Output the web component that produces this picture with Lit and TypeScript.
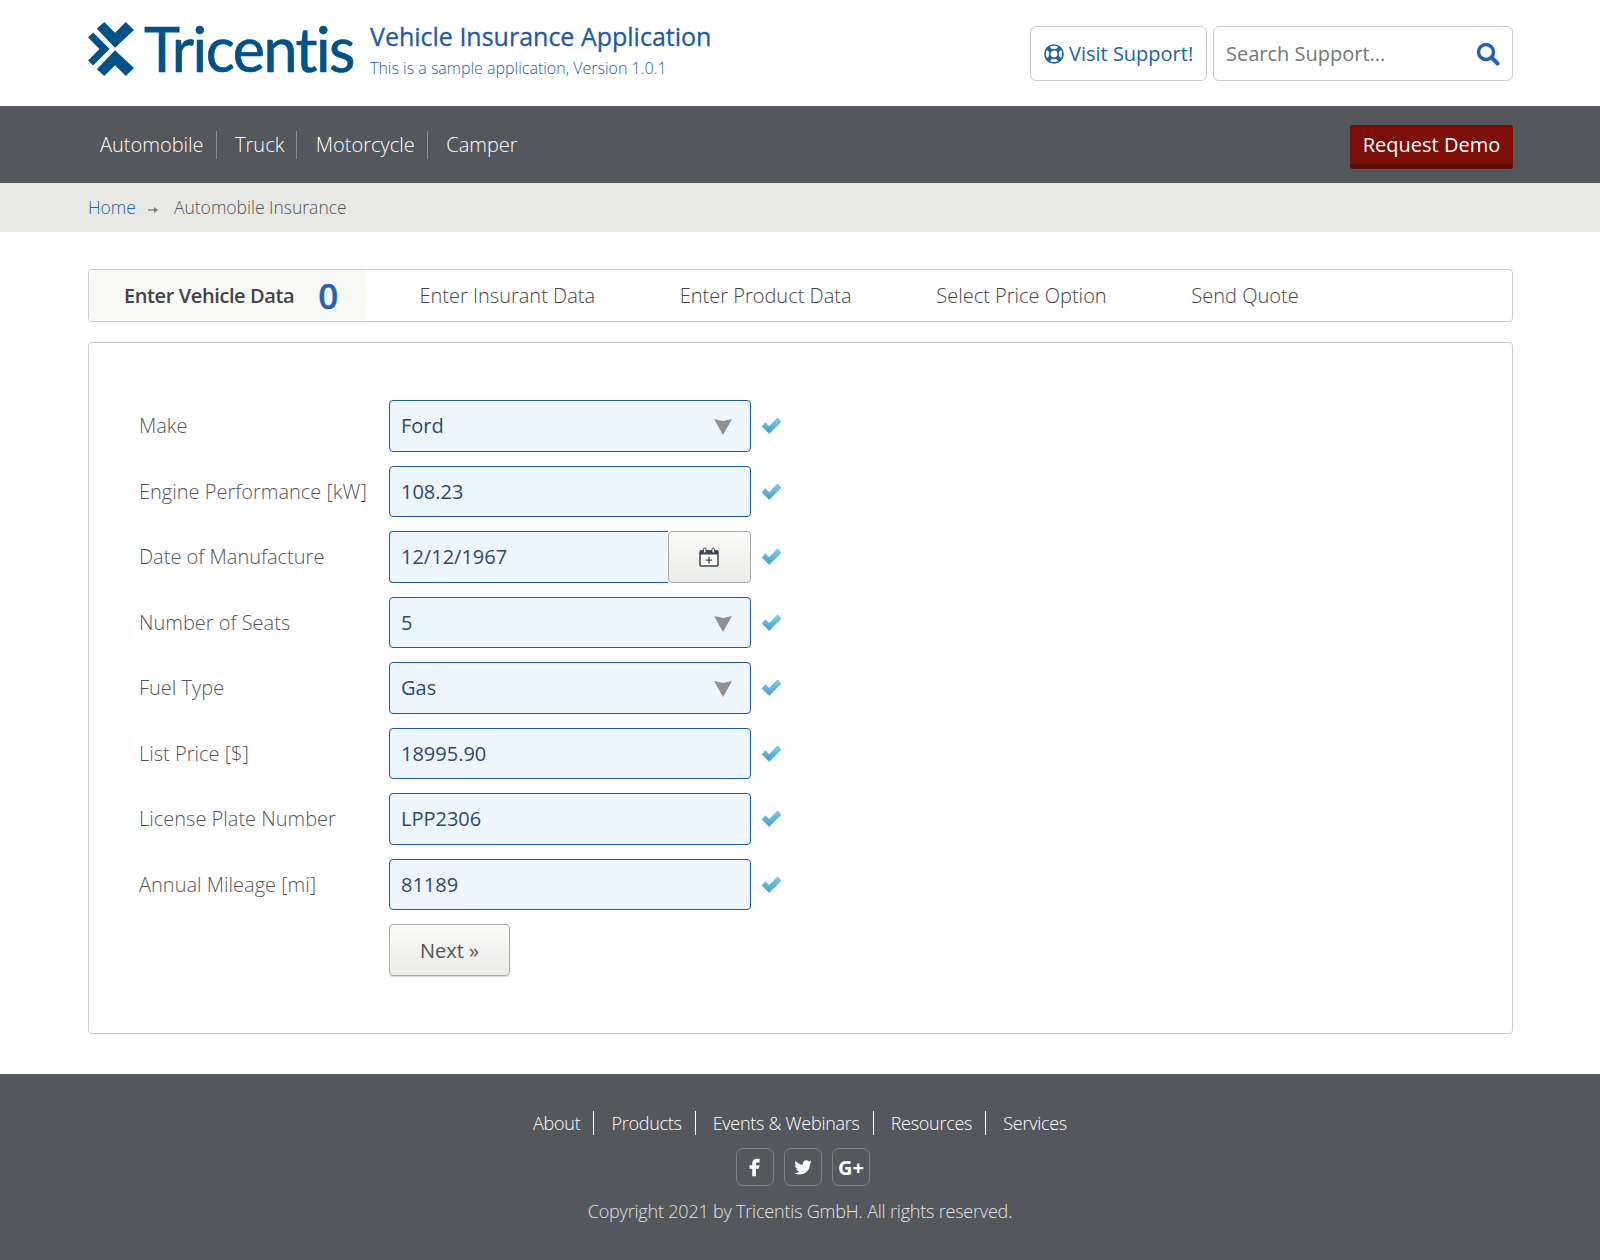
import { LitElement, html, css, unsafeCSS } from 'lit';
import { customElement } from 'lit/decorators.js';

const FONT = unsafeCSS(`"Open Sans", "Noto Sans", sans-serif`);

const navItems = ['Automobile', 'Truck', 'Motorcycle', 'Camper'];
const tabs = ['Enter Insurant Data', 'Enter Product Data', 'Select Price Option', 'Send Quote'];
const footerLinks = ['About', 'Products', 'Events & Webinars', 'Resources', 'Services'];

const fields = [
  { label: 'Make', type: 'select', value: 'Ford' },
  { label: 'Engine Performance [kW]', type: 'input', value: '108.23' },
  { label: 'Date of Manufacture', type: 'date', value: '12/12/1967' },
  { label: 'Number of Seats', type: 'select', value: '5' },
  { label: 'Fuel Type', type: 'select', value: 'Gas' },
  { label: 'List Price [$]', type: 'input', value: '18995.90' },
  { label: 'License Plate Number', type: 'input', value: 'LPP2306' },
  { label: 'Annual Mileage [mi]', type: 'input', value: '81189' },
];

const logoMark = html`<svg class="mark" viewBox="10 13 136 160" width="46" height="54">
  <g fill="#005288">
    <polygon points="58,13 90,45 122,13 146,37 90,89 36,33"/>
    <polygon points="25,44 74,93 25,142 10,127 44,93 10,59"/>
    <polygon points="90,97 146,149 122,173 90,141 58,173 36,153"/>
  </g>
</svg>`;

const check = html`<svg class="check" viewBox="0 0 22 18" width="21" height="17">
  <defs>
    <linearGradient id="chk" x1="0" y1="0" x2="0" y2="1">
      <stop offset="0" stop-color="#7fcdec"/>
      <stop offset="1" stop-color="#3f9fcf"/>
    </linearGradient>
  </defs>
  <path d="M1 10L4.500 6L8.500 10L17.500 1L21 5L8.500 17.500Z" fill="url(#chk)" stroke="#3f9fca" stroke-width="0.6"/>
</svg>`;

const arrow = html`<svg class="arrow" viewBox="0 0 18 16" width="18" height="16">
  <polygon points="0,0 9,2 18,0 9,16" fill="#909090"/>
</svg>`;

const calendar = html`<svg viewBox="0 0 20 20" width="20" height="20">
  <rect x="1" y="4" width="18" height="15" rx="1" fill="#fff" stroke="#3c4650" stroke-width="1.500"/>
  <rect x="1" y="3.500" width="18" height="4" fill="#3c4650"/>
  <rect x="4.500" y="1" width="2.500" height="5" rx="1.200" fill="#fff" stroke="#3c4650"/>
  <rect x="13" y="1" width="2.500" height="5" rx="1.200" fill="#fff" stroke="#3c4650"/>
  <path d="M10 10v6.500M6.700 13.200h6.600" stroke="#3c4650" stroke-width="1.300"/>
</svg>`;

const crumbArrow = html`<svg class="sep" viewBox="0 0 10 8" width="10" height="8">
  <path d="M0 4H7" stroke="#777" stroke-width="1.400"/>
  <polygon points="6,1 10,4 6,7" fill="#777"/>
</svg>`;

const lifebuoy = html`<svg viewBox="0 0 20 20" width="20" height="20">
  <circle cx="10" cy="10" r="9" fill="#fff" stroke="#2262ae" stroke-width="1.700"/>
  <path d="M3.500 3.500L7 7M16.500 3.500L13 7M3.500 16.500L7 13M16.500 16.500L13 13" stroke="#2262ae" stroke-width="4.200"/>
  <circle cx="10" cy="10" r="4.300" fill="#fff" stroke="#2262ae" stroke-width="1.700"/>
</svg>`;

const magnifier = html`<svg viewBox="0 0 24 24" width="24" height="24">
  <circle cx="10" cy="10" r="7.500" fill="none" stroke="#2262ae" stroke-width="3.400"/>
  <path d="M15.500 15.500L21.500 21.500" stroke="#2262ae" stroke-width="4" stroke-linecap="round"/>
</svg>`;

const facebook = html`<svg viewBox="0 0 24 24" width="22" height="22">
  <path fill="#fff" d="M14 7h3V3h-3c-2.800 0-5 2.200-5 5v2H6v4h3v8h4v-8h3l1-4h-4V8c0-.6.4-1 1-1z"/>
</svg>`;

const twitter = html`<svg viewBox="0 0 24 24" width="20" height="20">
  <path fill="#fff" d="M22.460 6c-.77.35-1.600.58-2.460.69.880-.53 1.560-1.370 1.880-2.380-.83.500-1.750.850-2.720 1.050C18.370 4.500 17.260 4 16 4c-2.350 0-4.270 1.920-4.270 4.290 0 .34.040.67.110.98C8.280 9.090 5.110 7.380 3 4.790c-.37.630-.58 1.370-.58 2.150 0 1.490.75 2.810 1.910 3.560-.71 0-1.370-.2-1.950-.5v.03c0 2.080 1.480 3.820 3.440 4.210a4.220 4.220 0 0 1-1.930.07 4.280 4.280 0 0 0 4 2.980 8.521 8.521 0 0 1-5.330 1.840c-.34 0-.68-.02-1.020-.06C3.440 20.290 5.700 21 8.120 21 16 21 20.330 14.460 20.330 8.790c0-.19 0-.37-.01-.56.840-.6 1.560-1.360 2.140-2.230z"/>
</svg>`;

@customElement('app-root')
export class AppRoot extends LitElement {
  static styles = css`
    :host {
      display: block;
      font-family: ${FONT};
      color: #555;
      background: #fff;
    }
    * { box-sizing: border-box; }
    .wrap {
      width: 1425px;
      margin: 0 0 0 88px;
    }
    .header .wrap {
      height: 106px;
      display: flex;
      align-items: flex-start;
    }
    .logo {
      display: flex;
      align-items: center;
      margin-top: 20px;
      height: 58px;
    }
    .logo-text {
      font-family: "Lato", "Open Sans", sans-serif;
      font-size: 61px;
      line-height: 58px;
      color: #005288;
      letter-spacing: -1.500px;
      margin-left: 10px;
      -webkit-text-stroke: 0.7px #005288;
    }
    .titles { margin: 19px 0 0 16px; }
    .title {
      font-size: 25px;
      line-height: 34px;
      color: #1f5aa6;
      -webkit-text-stroke: 0.3px #1f5aa6;
    }
    .subtitle {
      font-size: 16px;
      font-weight: 300;
      line-height: 24px;
      color: #2262ae;
      margin-top: 3px;
    }
    .tools {
      margin-left: auto;
      margin-top: 26px;
      display: flex;
      gap: 6px;
    }
    .visit, .search {
      height: 55px;
      border: 1px solid #ccc;
      border-radius: 6px;
      display: flex;
      align-items: center;
      background: #fff;
    }
    .visit {
      width: 177px;
      padding-left: 13px;
      gap: 5px;
      font-size: 20px;
      color: #2262ae;
    }
    .search {
      width: 300px;
      padding: 0 12px;
      font-size: 20px;
      color: #777;
      justify-content: space-between;
    }

    .nav { background: #54575c; height: 77px; }
    .nav .wrap { height: 77px; display: flex; align-items: center; }
    .nav-list { display: flex; align-items: center; padding-left: 12px; }
    .nav-item {
      font-size: 20px;
      font-weight: 300;
      line-height: 28px;
      color: #fff;
      padding-right: 12px;
      margin-right: 18.500px;
      border-right: 1px solid #8b8e92;
    }
    .nav-item:last-child { border: 0; }
    .demo {
      margin-left: auto;
      margin-top: 5px;
      width: 163px;
      height: 44px;
      background: #7b0f08;
      border-bottom: 5px solid #5e0c06;
      border-radius: 3px;
      color: #fff;
      font-size: 20px;
      display: flex;
      align-items: center;
      justify-content: center;
    }

    .crumbs { background: #e8e8e4; height: 49px; }
    .crumbs .wrap {
      height: 49px;
      display: flex;
      align-items: center;
      font-size: 17.500px;
      font-weight: 300;
      color: #555;
      padding-bottom: 2px;
    }
    .crumbs a { color: #2262ae; }
    .crumbs .sep { margin: 6px 16px 0 12px; }

    .tabs {
      margin-top: 37px;
      height: 53px;
      border: 1px solid #ccc;
      border-radius: 4px;
      display: flex;
      align-items: center;
      overflow: hidden;
    }
    .tab-active {
      width: 276px;
      height: 100%;
      background: #f8f8f6;
      display: flex;
      align-items: center;
      padding-left: 35px;
      font-size: 20px;
      font-weight: 600;
      letter-spacing: -0.4px;
      color: #444;
    }
    .tab-count {
      font-size: 35px;
      letter-spacing: 0;
      color: #2262ae;
      margin-left: 24px;
      -webkit-text-stroke: 0.3px #2262ae;
    }
    .tab {
      font-size: 20px;
      font-weight: 300;
      color: #444;
      margin-left: 54px;
      margin-right: 30.200px;
      padding-left: 0.500px;
    }

    .card {
      margin-top: 20px;
      height: 692px;
      border: 1px solid #ccc;
      border-radius: 4px;
      padding: 57px 0 0 50px;
    }
    .row {
      display: flex;
      align-items: center;
      height: 51.500px;
      margin-bottom: 14px;
    }
    .label {
      width: 250px;
      font-size: 20px;
      font-weight: 300;
      color: #555;
    }
    .control {
      width: 362px;
      height: 100%;
      position: relative;
      display: flex;
    }
    .control input {
      flex: 1;
      min-width: 0;
      width: 100%;
      height: 100%;
      border: 1px solid #1f5aa6;
      border-radius: 4px;
      background: #edf5fe;
      padding: 0 11px;
      font: 20px ${FONT};
      color: #2f4a6b;
      outline: none;
    }
    .control .arrow {
      position: absolute;
      right: 19px;
      top: 19px;
    }
    .control.date input { border-radius: 4px 0 0 4px; border-right: 0; }
    .cal {
      flex: none;
      width: 83px;
      height: 100%;
      border: 1px solid #aaa;
      border-radius: 4px;
      background: linear-gradient(#fafaf8, #ebebe7);
      display: flex;
      align-items: center;
      justify-content: center;
      padding-right: 2px;
    }
    .check { margin-left: 10px; }
    .next {
      margin-left: 250px;
      width: 121px;
      height: 52px;
      border: 1px solid #aaa;
      border-radius: 4px;
      background: linear-gradient(#fafaf8, #ebebe7);
      box-shadow: 0 1px 1px rgba(0, 0, 0, 0.15);
      color: #555;
      font-size: 20px;
      display: flex;
      align-items: center;
      justify-content: center;
    }

    .footer {
      margin-top: 40px;
      height: 186px;
      background: #54575c;
      display: flex;
      flex-direction: column;
      align-items: center;
    }
    .foot-links { display: flex; margin: 37px 0 0 -4px; }
    .foot-link {
      font-size: 18px;
      font-weight: 300;
      line-height: 24px;
      letter-spacing: -0.270px;
      color: #fff;
      padding: 0 13px 0 17px;
      border-right: 1px solid #fff;
    }
    .foot-link:last-child { border: 0; }
    .social { display: flex; gap: 10px; margin: 13px 0 0 6px; }
    .social div {
      width: 38px;
      height: 38px;
      border: 1px solid #7d8084;
      border-radius: 7px;
      display: flex;
      align-items: center;
      justify-content: center;
      color: #fff;
      font-size: 20px;
      font-weight: 700;
    }
    .copy {
      margin-top: 12px;
      font-size: 18px;
      font-weight: 300;
      line-height: 26px;
      letter-spacing: -0.200px;
      color: #e2e2e2;
    }
  `;

  renderControl(f: { type: string; value: string }) {
    if (f.type === 'date') {
      return html`<div class="control date"><input .value=${f.value} /><div class="cal">${calendar}</div></div>`;
    }
    return html`<div class="control"><input .value=${f.value} />${f.type === 'select' ? arrow : ''}</div>`;
  }

  render() {
    return html`
      <header class="header">
        <div class="wrap">
          <div class="logo">${logoMark}<span class="logo-text">Tricentis</span></div>
          <div class="titles">
            <div class="title">Vehicle Insurance Application</div>
            <div class="subtitle">This is a sample application, Version 1.0.1</div>
          </div>
          <div class="tools">
            <div class="visit">${lifebuoy}<span>Visit Support!</span></div>
            <div class="search"><span>Search Support...</span>${magnifier}</div>
          </div>
        </div>
      </header>
      <nav class="nav">
        <div class="wrap">
          <div class="nav-list">
            ${navItems.map((n) => html`<div class="nav-item">${n}</div>`)}
          </div>
          <div class="demo">Request Demo</div>
        </div>
      </nav>
      <div class="crumbs">
        <div class="wrap"><a>Home</a>${crumbArrow}<span>Automobile Insurance</span></div>
      </div>
      <div class="wrap">
        <div class="tabs">
          <div class="tab-active">Enter Vehicle Data<span class="tab-count">0</span></div>
          ${tabs.map((t) => html`<div class="tab">${t}</div>`)}
        </div>
        <div class="card">
          ${fields.map((f) => html`
            <div class="row">
              <div class="label">${f.label}</div>
              ${this.renderControl(f)}
              ${check}
            </div>
          `)}
          <div class="next">Next »</div>
        </div>
      </div>
      <footer class="footer">
        <div class="foot-links">
          ${footerLinks.map((l) => html`<div class="foot-link">${l}</div>`)}
        </div>
        <div class="social">
          <div>${facebook}</div>
          <div>${twitter}</div>
          <div>G+</div>
        </div>
        <div class="copy">Copyright 2021 by Tricentis GmbH. All rights reserved.</div>
      </footer>
    `;
  }
}
